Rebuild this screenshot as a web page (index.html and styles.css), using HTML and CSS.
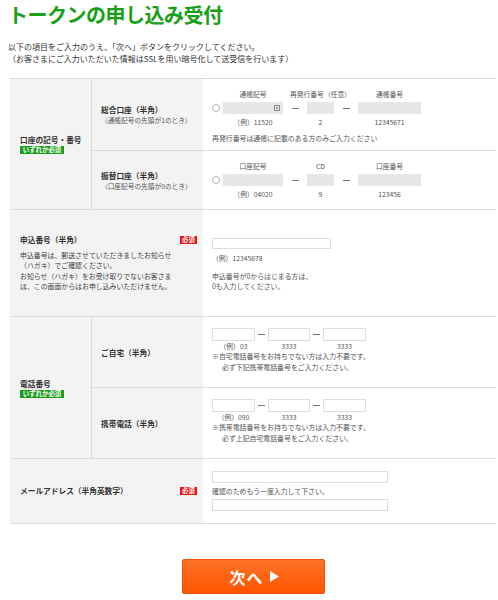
FILE: index.html
```html
<!DOCTYPE html>
<html lang="ja">
<head>
<meta charset="utf-8">
<title>トークンの申し込み受付</title>
<link rel="stylesheet" href="styles.css">
</head>
<body>
<div class="page">
  <h1 class="title">トークンの申し込み受付</h1>
  <p class="intro">以下の項目をご入力のうえ、「次へ」ボタンをクリックしてください。<br>（お客さまにご入力いただいた情報はSSLを用い暗号化して送受信を行います）</p>

  <div class="form">
    <div class="section">
      <div class="label">
        <span class="label-text">口座の記号・番号</span>
        <span class="badge green">いずれか必須</span>
      </div>
      <div class="subrows">
        <div class="subrow sub-sogo">
          <div class="sublabel">
            <span class="sub-title">総合口座（半角）</span>
            <span class="sub-note">（通帳記号の先頭が1のとき）</span>
          </div>
          <div class="content content-acct">
            <div class="acct-grid">
              <span class="hd c2">通帳記号</span>
              <span class="hd c345">再発行番号（任意）</span>
              <span class="hd c6">通帳番号</span>
              <span class="radio"></span>
              <span class="inp gray"><svg class="spin" width="6" height="6" viewBox="0 0 6 6"><rect x="0.5" y="0.5" width="5" height="5" fill="#f4f4f4" stroke="#888" stroke-width="1"/><path d="M3 1.5V4.5M1.6 3H4.4" stroke="#777" stroke-width="0.8"/></svg></span>
              <span class="dash"></span>
              <span class="inp gray"></span>
              <span class="dash"></span>
              <span class="inp gray"></span>
              <span class="ex c2">（例）11520</span>
              <span class="ex c4">2</span>
              <span class="ex c6">12345671</span>
            </div>
            <p class="note acct-note">再発行番号は通帳に記載のある方のみご入力ください</p>
          </div>
        </div>
        <div class="subrow sub-furikae">
          <div class="sublabel">
            <span class="sub-title">振替口座（半角）</span>
            <span class="sub-note">（口座記号の先頭が0のとき）</span>
          </div>
          <div class="content content-acct">
            <div class="acct-grid">
              <span class="hd c2">口座記号</span>
              <span class="hd c345">CD</span>
              <span class="hd c6">口座番号</span>
              <span class="radio"></span>
              <span class="inp gray"></span>
              <span class="dash"></span>
              <span class="inp gray"></span>
              <span class="dash"></span>
              <span class="inp gray"></span>
              <span class="ex c2">（例）04020</span>
              <span class="ex c4">9</span>
              <span class="ex c6">123456</span>
            </div>
          </div>
        </div>
      </div>
    </div>

    <div class="section sec-apply">
      <div class="label wide label-apply">
        <div class="label-head">
          <span class="label-text">申込番号（半角）</span>
          <span class="badge red">必須</span>
        </div>
        <p class="label-desc">申込番号は、郵送させていただきましたお知らせ<br>（ハガキ）でご確認ください。<br>お知らせ（ハガキ）をお受け取りでないお客さま<br>は、この画面からはお申し込みいただけません。</p>
      </div>
      <div class="content content-apply">
        <span class="inp white apply-inp"></span>
        <p class="ex ex-left apply-ex">（例）12345678</p>
        <p class="note apply-note">申込番号が0からはじまる方は、<br>0も入力してください。</p>
      </div>
    </div>

    <div class="section">
      <div class="label">
        <span class="label-text">電話番号</span>
        <span class="badge green">いずれか必須</span>
      </div>
      <div class="subrows">
        <div class="subrow sub-phone">
          <div class="sublabel">
            <span class="sub-title">ご自宅（半角）</span>
          </div>
          <div class="content content-phone">
            <div class="phone-grid">
              <span class="inp white"></span>
              <span class="dash"></span>
              <span class="inp white"></span>
              <span class="dash"></span>
              <span class="inp white"></span>
              <span class="ex">（例）03</span>
              <span></span>
              <span class="ex">3333</span>
              <span></span>
              <span class="ex">3333</span>
            </div>
            <p class="note phone-note">※自宅電話番号をお持ちでない方は入力不要です。<br><span class="indent">必ず下記携帯電話番号をご入力ください。</span></p>
          </div>
        </div>
        <div class="subrow sub-phone">
          <div class="sublabel">
            <span class="sub-title">携帯電話（半角）</span>
          </div>
          <div class="content content-phone">
            <div class="phone-grid">
              <span class="inp white"></span>
              <span class="dash"></span>
              <span class="inp white"></span>
              <span class="dash"></span>
              <span class="inp white"></span>
              <span class="ex">（例）090</span>
              <span></span>
              <span class="ex">3333</span>
              <span></span>
              <span class="ex">3333</span>
            </div>
            <p class="note phone-note">※携帯電話番号をお持ちでない方は入力不要です。<br><span class="indent">必ず上記自宅電話番号をご入力ください。</span></p>
          </div>
        </div>
      </div>
    </div>

    <div class="section sec-mail">
      <div class="label wide label-mail">
        <div class="label-head">
          <span class="label-text">メールアドレス（半角英数字）</span>
          <span class="badge red">必須</span>
        </div>
      </div>
      <div class="content content-mail">
        <span class="inp white mail-inp"></span>
        <p class="note mail-note">確認のためもう一度入力して下さい。</p>
        <span class="inp white mail-inp"></span>
      </div>
    </div>
  </div>

  <div class="actions">
    <button class="next-btn" type="button">次へ<svg class="tri" width="9" height="11" viewBox="0 0 9 11"><path d="M0 0L9 5.5L0 11Z" fill="#fff"/></svg></button>
  </div>
</div>
</body>
</html>
```

FILE: styles.css
```css
html, body {
  margin: 0;
  padding: 0;
  background: #fff;
}

body {
  font-family: "Noto Sans CJK JP", "Noto Sans", sans-serif;
  color: #333;
}

p {
  margin: 0;
}

.page {
  padding: 1px 0 0 8px;
}

.title {
  margin: 0;
  font-size: 20px;
  line-height: 28px;
  font-weight: bold;
  letter-spacing: -0.5px;
  color: #17a017;
}

.intro {
  margin-top: 12px;
  font-size: 8px;
  line-height: 12px;
  color: #333;
}

.form {
  margin: 13px 0 0 2px;
  width: 486px;
  border-top: 1px solid #dcdcdc;
}

.section {
  display: flex;
  border-bottom: 1px solid #dcdcdc;
}

.label {
  box-sizing: border-box;
  width: 82px;
  flex: none;
  background: #f3f3f3;
  border-right: 1px solid #dcdcdc;
  padding-left: 10px;
  display: flex;
  flex-direction: column;
  justify-content: center;
  align-items: flex-start;
}

.label.wide {
  width: 193px;
  border-right: none;
  padding-right: 6px;
  align-items: stretch;
}

.label-text {
  font-size: 7.7px;
  line-height: 12px;
  font-weight: bold;
  color: #333;
  white-space: nowrap;
}

.label-head {
  display: flex;
  justify-content: space-between;
  align-items: center;
}

.badge {
  display: inline-block;
  height: 8px;
  line-height: 8px;
  font-size: 6.4px;
  font-weight: bold;
  color: #fff;
  padding: 0 2px;
  white-space: nowrap;
}

.badge.green {
  background: #1c9e1c;
  width: 40px;
  text-align: center;
}

.badge.red {
  background: #ee1111;
  width: 13px;
  text-align: center;
}

.label-desc {
  margin-top: 4px;
  font-size: 6.9px;
  line-height: 10.4px;
  color: #444;
  white-space: nowrap;
}

.label-apply {
  justify-content: flex-start;
  padding-top: 24px;
}

.subrows {
  flex: 1;
  display: flex;
  flex-direction: column;
}

.subrow {
  display: flex;
}

.subrow + .subrow {
  border-top: 1px solid #dcdcdc;
}

.sub-sogo {
  height: 71px;
}

.sub-furikae {
  height: 58px;
}

.sub-phone {
  height: 70px;
}

.sublabel {
  width: 111px;
  flex: none;
  box-sizing: border-box;
  background: #f3f3f3;
  padding-left: 9px;
  display: flex;
  flex-direction: column;
  justify-content: center;
}

.sub-title {
  font-size: 7.7px;
  line-height: 11px;
  font-weight: bold;
  color: #333;
  white-space: nowrap;
}

.sub-note {
  font-size: 6.7px;
  line-height: 10px;
  color: #555;
  white-space: nowrap;
}

.content {
  flex: 1;
  box-sizing: border-box;
  padding-left: 9px;
}

.content-acct {
  padding-top: 10px;
}

.acct-grid {
  display: grid;
  grid-template-columns: 11px 60px 24px 27px 24px 63px;
  grid-template-rows: 10px 12px 10px;
  row-gap: 3px;
  align-items: center;
}

.hd, .ex {
  font-size: 6.8px;
  line-height: 10px;
  color: #555;
  text-align: center;
  white-space: nowrap;
}

.c2 { grid-column: 2; }
.c345 { grid-column: 3 / 6; }
.c4 { grid-column: 4; }
.c6 { grid-column: 6; }

.radio {
  grid-column: 1;
  width: 8px;
  height: 8px;
  box-sizing: border-box;
  border: 1px solid #b5b5b5;
  border-radius: 50%;
  background: #fff;
}

.inp {
  display: block;
  box-sizing: border-box;
}

.inp.gray {
  height: 12px;
  background: #e7e7e7;
  display: flex;
  justify-content: flex-end;
  align-items: center;
  padding-right: 3px;
}

.inp.white {
  height: 13px;
  background: #fff;
  border: 1px solid #dedede;
}

.spin {
  display: block;
}

.dash {
  justify-self: center;
  width: 7px;
  height: 1px;
  background: #777;
}

.note {
  font-size: 6.9px;
  line-height: 10px;
  color: #555;
  white-space: nowrap;
}

.acct-note {
  margin-top: 6px;
}

.content-apply {
  padding-top: 28px;
}

.apply-inp.white {
  width: 119px;
  height: 11px;
}

.ex-left {
  text-align: left;
}

.apply-ex {
  margin-top: 4px;
}

.apply-note {
  margin-top: 8px;
}

.sec-apply {
  height: 106px;
}

.content-phone {
  padding-top: 11px;
}

.phone-grid {
  display: grid;
  grid-template-columns: 43px 13px 42px 13px 43px;
  grid-template-rows: 13px 10px;
  align-items: center;
}

.phone-note {
  line-height: 11px;
}

.indent {
  padding-left: 10px;
}

.sec-mail {
  height: 64px;
}

.label-mail {
  justify-content: center;
}

.content-mail {
  padding-top: 12px;
}

.mail-inp.white {
  width: 176px;
  height: 12px;
}

.mail-note {
  margin: 3px 0;
}

.actions {
  width: 486px;
  margin: 35px 0 0 2px;
  display: flex;
  justify-content: center;
}

.next-btn {
  width: 143px;
  height: 35px;
  box-sizing: border-box;
  border: 1px solid #ec5200;
  border-radius: 2px;
  background: linear-gradient(#ff7226, #ff5500);
  color: #fff;
  font-family: "Noto Sans CJK JP", sans-serif;
  font-size: 16px;
  font-weight: bold;
  display: flex;
  align-items: center;
  justify-content: center;
  padding: 0 0 0 2px;
  letter-spacing: 1px;
}

.tri {
  display: block;
  margin-left: 6px;
}
```
